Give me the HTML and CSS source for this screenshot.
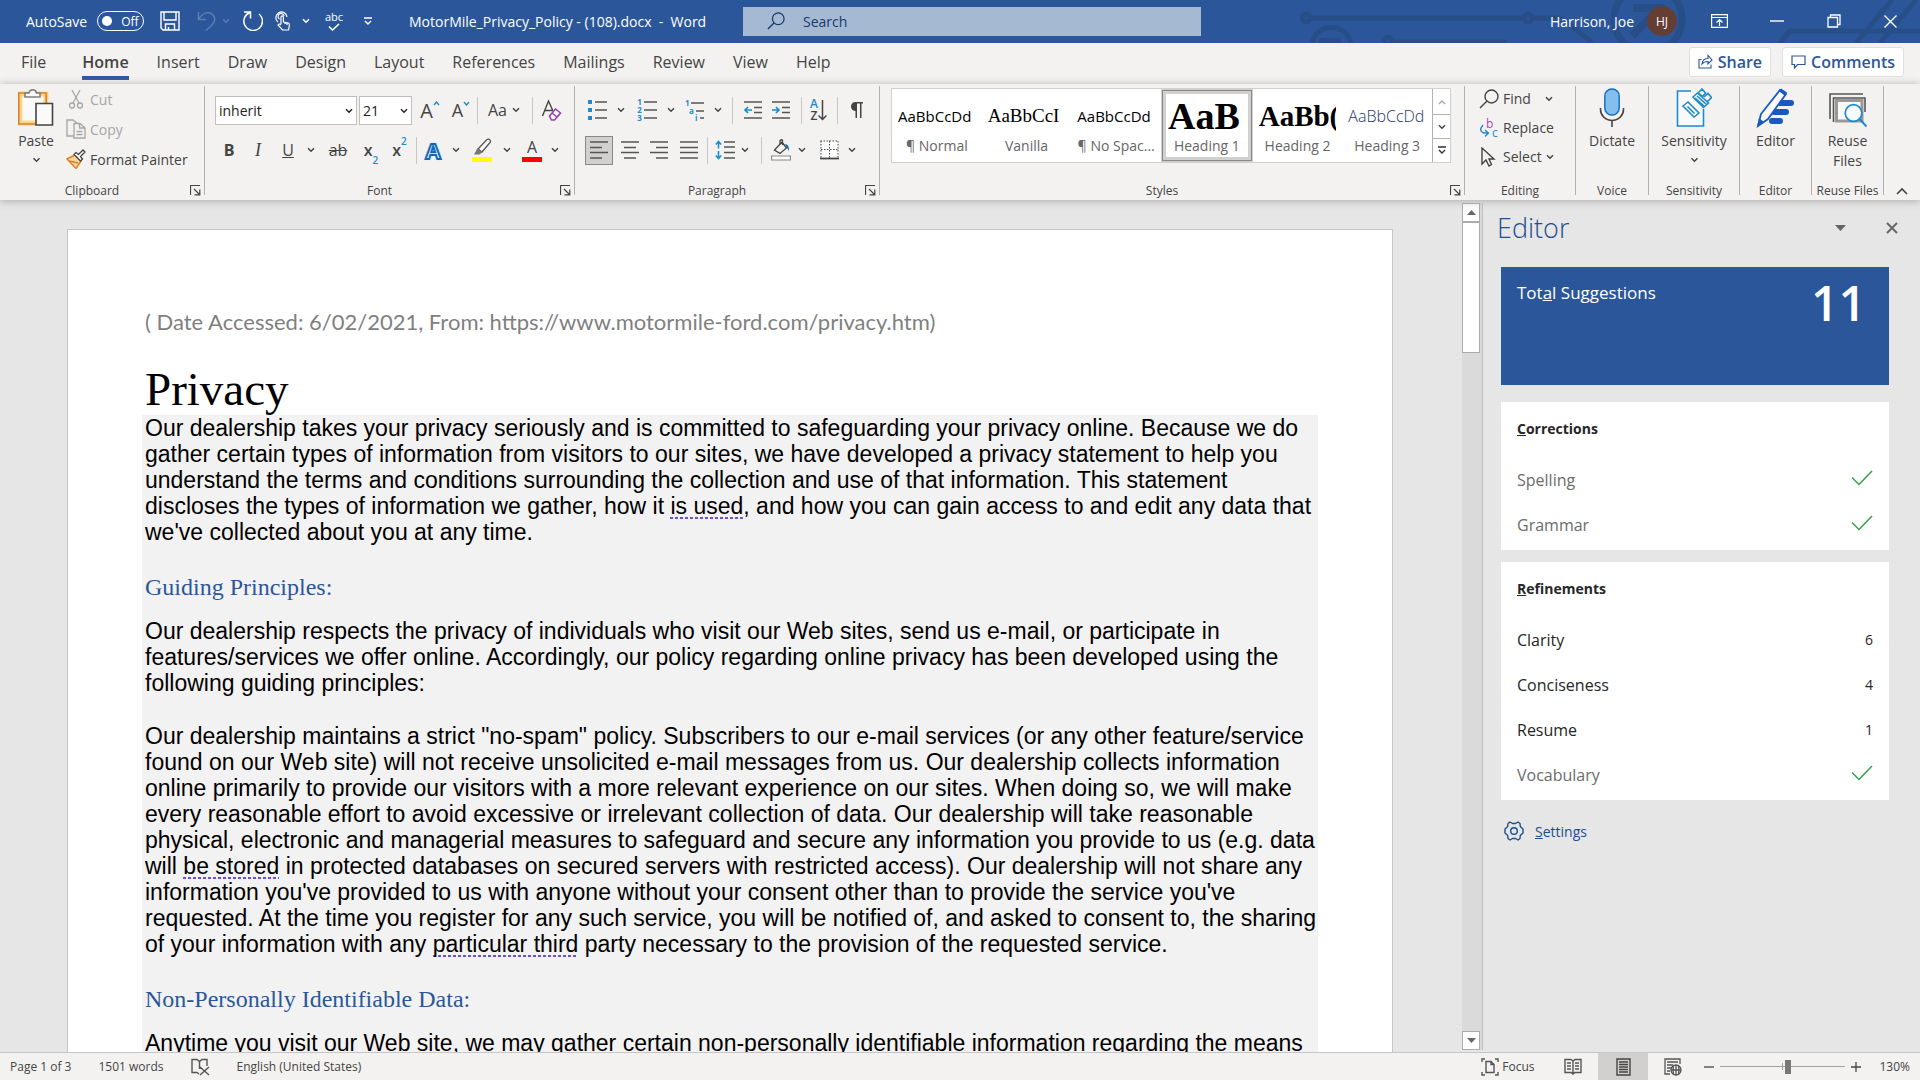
FILE: index.html
```html
<!DOCTYPE html>
<html lang="en">
<head>
<meta charset="utf-8">
<title>MotorMile_Privacy_Policy - (108).docx - Word</title>
<link rel="stylesheet" href="styles.css">
</head>
<body>
<svg class="sprite" aria-hidden="true">
  <symbol id="chev" viewBox="0 0 8 6"><path d="M1 1.2l3 3 3-3" fill="none" stroke="currentColor" stroke-width="1.5"/></symbol>
  <symbol id="launch" viewBox="0 0 11 11"><path d="M.5 10V.5H10M4 4l5.5 5.5M9.8 4.5v5.3H4.5" fill="none" stroke="currentColor" stroke-width="1.2"/></symbol>
  <symbol id="check" viewBox="0 0 22 16"><path d="M1 7.500l7 7L21 1" fill="none" stroke="#35a04a" stroke-width="1.500"/></symbol>
  <symbol id="lens" viewBox="0 0 20 20"><circle cx="12.500" cy="7.500" r="6.500" fill="none" stroke="currentColor" stroke-width="1.400"/><path d="M8 12l-7 7" stroke="currentColor" stroke-width="1.500"/></symbol>
</svg>

<header class="titlebar">
  <svg class="circuit" viewBox="0 0 620 43" aria-hidden="true">
    <g fill="none" stroke="#274e87" stroke-width="5">
      <circle cx="6" cy="18" r="4"/><path d="M10 18h213"/><circle cx="228" cy="18" r="4"/><path d="M232 18h28l32 24"/>
      <path d="M12 43a20 20 0 0 1 39 0"/><path d="M19 41h22" stroke-width="6"/>
      <circle cx="88" cy="41" r="4"/><path d="M92 42h115"/>
      <circle cx="348" cy="19" r="34" stroke-width="7"/><path d="M333 8h28v26M360 8l-28 28" stroke-width="8"/>
      <path d="M480 43l10-12h130M556 43l36-43M580 43l36-43"/>
    </g>
  </svg>
  <div class="quick">
    <span id="autosave-label">AutoSave</span>
    <button class="toggle" aria-labelledby="autosave-label"><i></i>Off</button>
    <button aria-label="Save"><svg width="20" height="20" viewBox="0 0 20 20" fill="none" stroke="#fff" stroke-width="1.400"><path d="M1 1h18v18H3l-2-2zM4 1v8h12V1M5.500 19v-6h9v6M8.500 19v-3"/></svg></button>
    <button aria-label="Undo" class="faded"><svg width="19" height="20" viewBox="0 0 19 20" fill="none" stroke="currentColor" stroke-width="1.500"><path d="M1.500 1v7.500H9M1.500 8.500C6 1 12 0 15.500 3.500S18 11 15 14L9 19.500"/></svg></button>
    <button aria-label="Undo options" class="faded"><svg width="8" height="6"><use href="#chev"/></svg></button>
    <button aria-label="Redo"><svg width="20" height="20" viewBox="0 0 20 20" fill="none" stroke="#fff" stroke-width="1.500"><path d="M1 1h6.500v6.500M7 1.500A9.300 9.300 0 1 0 16 3"/></svg></button>
    <button aria-label="Touch mode"><svg width="16" height="20" viewBox="0 0 16 20" fill="none" stroke="#fff" stroke-width="1.200"><path d="M3 11a5.600 5.600 0 1 1 9-5M4.500 8a3 3 0 1 1 4.500-3"/><path d="M6 13V6a1.200 1.200 0 0 1 2.400 0v5l5 1q1.200.5 1 2l-.8 5H7.500L3 14q1-2 3 0M10 11v2M12 12v2"/></svg></button>
    <button aria-label="Touch options"><svg width="8" height="6"><use href="#chev"/></svg></button>
    <button aria-label="Spelling" class="abc">abc<svg width="12" height="8" viewBox="0 0 12 8"><path d="M1 3.500l3.500 3.500L11 1" fill="none" stroke="#fff" stroke-width="1.500"/></svg></button>
    <button aria-label="Customize"><svg width="10" height="9" viewBox="0 0 10 9"><path d="M1 1h8M2 4l3 3 3-3" fill="none" stroke="#fff" stroke-width="1.400"/></svg></button>
  </div>
  <span class="doc-title">MotorMile_Privacy_Policy - (108).docx&nbsp; -&nbsp; Word</span>
  <label class="search"><svg width="18" height="18"><use href="#lens"/></svg><input type="text" placeholder="Search" aria-label="Search"></label>
  <div class="account">
    <span>Harrison, Joe</span><span class="avatar">HJ</span>
    <button aria-label="Ribbon display"><svg width="17" height="14" viewBox="0 0 17 14" fill="none" stroke="#fff" stroke-width="1.200"><path d="M.6.6h15.800v12.800H.6zM.6 3.500h15.800M8.500 12V6M5.500 8.500l3-3 3 3"/></svg></button>
    <button aria-label="Minimize"><svg width="14" height="2"><path d="M0 1h14" stroke="#fff" stroke-width="1.400"/></svg></button>
    <button aria-label="Restore"><svg width="14" height="14" viewBox="0 0 14 14" fill="none" stroke="#fff" stroke-width="1.300"><path d="M1 3.500h9.500V13H1zM3.500 3.500V1H13v9.500h-2.500"/></svg></button>
    <button aria-label="Close"><svg width="13" height="13"><path d="M.5.5l12 12M12.500.5l-12 12" stroke="#fff" stroke-width="1.400"/></svg></button>
  </div>
</header>

<nav class="tabs">
  <a href="#file" class="file">File</a><a href="#home" class="active">Home</a><a href="#insert">Insert</a><a href="#draw">Draw</a><a href="#design">Design</a><a href="#layout">Layout</a><a href="#references">References</a><a href="#mailings">Mailings</a><a href="#review">Review</a><a href="#view">View</a><a href="#help">Help</a>
  <div class="tab-actions">
    <button><svg width="15" height="15" viewBox="0 0 15 15" fill="none" stroke="currentColor" stroke-width="1.100"><path d="M3.500 5.500H1V14h12v-3.500M4 10c.5-4 2.500-5.500 6-5.500V1.500L14 6l-4 4V7.500C7 7.500 5.500 8 4 10z"/></svg>Share</button>
    <button><svg width="15" height="14" viewBox="0 0 15 14" fill="none" stroke="currentColor" stroke-width="1.200"><path d="M1 1h13v8.500H6.500L3.500 13V9.500H1z"/></svg>Comments</button>
  </div>
</nav>

<section class="ribbon">
  <div class="group clipboard">
    <div class="clip-body">
      <button class="big">
        <svg width="36" height="40" viewBox="0 0 36 40" fill="none"><path d="M2 6h26v29H2z" fill="#fafafa" stroke="#fbd78b" stroke-width="5"/><path d="M.8 5h27.400v31H.8z" stroke="#e07f24" stroke-width="1.600"/><path d="M7 9V5h4a3.800 3.800 0 0 1 7.500 0H22v4z" fill="#fafafa" stroke="#808080" stroke-width="1.600"/><path d="M18 15.500h16.500V37H18z" fill="#fafafa" stroke="#444" stroke-width="1.600"/></svg>
        Paste<svg width="9" height="6"><use href="#chev"/></svg></button>
      <div class="clip-list">
        <button class="off"><svg width="20" height="20" viewBox="0 0 20 20" fill="none" stroke="currentColor" stroke-width="1.300"><path d="M6 1l7 13M14 1L7 14"/><circle cx="6" cy="16.500" r="2.500"/><circle cx="14" cy="16.500" r="2.500"/></svg>Cut</button>
        <button class="off"><svg width="20" height="20" viewBox="0 0 20 20" fill="none" stroke="currentColor" stroke-width="1.300"><path d="M8 17H1V1h6l4 3M8 4.500h6l5 4.500v10H8zM13.500 4.500V9H19M10.500 12.500h6M10.500 15.500h6"/></svg>Copy</button>
        <button><svg width="20" height="20" viewBox="0 0 20 20" fill="none"><path d="M1 10l8-4 6 6-5 7.500z" fill="#fcd9a0" stroke="#e07f24" stroke-width="1.500"/><path d="M3.500 12L12 14" stroke="#e07f24" stroke-width="1.500"/><path d="M8 5.500l2-2 2.500 2 4.500-4.500 2 2-4.500 4.500 2 2.500-2 2z" fill="#fafafa" stroke="#444" stroke-width="1.300"/></svg>Format Painter</button>
      </div>
    </div>
    <footer class="launches">Clipboard<button aria-label="Clipboard settings"><svg width="11" height="11"><use href="#launch"/></svg></button></footer>
  </div>

  <div class="group font">
    <div class="tools font-a">
      <label class="combo"><select aria-label="Font"><option>inherit</option></select><svg width="8" height="6"><use href="#chev"/></svg></label>
      <label class="combo"><select aria-label="Font size"><option>21</option></select><svg width="8" height="6"><use href="#chev"/></svg></label>
      <button aria-label="Grow font" class="grow">A<svg width="7" height="5" viewBox="0 0 7 5"><path d="M1 4l2.500-3L6 4" fill="none" stroke="#1e8bcd" stroke-width="1.400"/></svg></button>
      <button aria-label="Shrink font" class="shrink">A<svg width="7" height="5" viewBox="0 0 7 5"><path d="M1 1l2.500 3L6 1" fill="none" stroke="#1e8bcd" stroke-width="1.400"/></svg></button>
      <i class="sep"></i>
      <button class="case">Aa<svg width="8" height="6"><use href="#chev"/></svg></button>
      <i class="sep"></i>
      <button aria-label="Clear formatting"><svg width="22" height="22" viewBox="0 0 22 22" fill="none"><path d="M1.500 17L7.500 2l4.500 10M4 11.500h7" stroke="#444" stroke-width="1.400"/><path d="M8.500 17l6-7 5 4-6 7h-3zM11 14l5 4" fill="#fff" stroke="#9b3fb0" stroke-width="1.600"/></svg></button>
    </div>
    <div class="tools font-b">
      <button><b>B</b></button><button class="ital">I</button><button><u>U</u></button><button aria-label="Underline style"><svg width="8" height="6"><use href="#chev"/></svg></button>
      <button><s>ab</s></button><button class="script-x">x<sub>2</sub></button><button class="script-x">x<sup>2</sup></button><i class="sep"></i>
      <button class="effect">A</button><button aria-label="Effects"><svg width="8" height="6"><use href="#chev"/></svg></button>
      <button aria-label="Highlight"><svg width="20" height="24" viewBox="0 0 20 24"><path d="M0 19h20v5H0z" fill="#ff0"/><path d="M6 11l9-9.500q2-1 3 .500t0 2.500l-8 9.500z" fill="#fafafa" stroke="#555" stroke-width="1.300"/><path d="M5.500 10l5 4-3 2.500H2z" fill="#777"/></svg></button><button aria-label="Highlight colour"><svg width="8" height="6"><use href="#chev"/></svg></button>
      <button class="color">A</button><button aria-label="Font colour"><svg width="8" height="6"><use href="#chev"/></svg></button>
    </div>
    <footer class="launches">Font<button aria-label="Font settings"><svg width="11" height="11"><use href="#launch"/></svg></button></footer>
  </div>

  <div class="group paragraph">
    <div class="tools para-a">
      <button aria-label="Bullets"><svg width="20" height="20" viewBox="0 0 20 20"><path d="M0 0h4v4H0zM0 8h4v4H0zM0 16h4v4H0z" fill="#1e8bcd"/><path d="M7 2h12M7 10h12M7 18h12" stroke="#555" stroke-width="1.400"/></svg></button><button aria-label="Bullet style"><svg width="8" height="6"><use href="#chev"/></svg></button>
      <button aria-label="Numbering" class="numbering"><span>1<br>2<br>3</span><svg width="13" height="20" viewBox="0 0 13 20"><path d="M0 2h13M0 10h13M0 18h13" stroke="#555" stroke-width="1.400"/></svg></button><button aria-label="Number style"><svg width="8" height="6"><use href="#chev"/></svg></button>
      <button aria-label="Multilevel list"><svg class="letters" width="20" height="21" viewBox="0 0 20 21"><g fill="#1e8bcd" font-family="Open Sans" font-weight="bold" font-size="8"><text x="0" y="6">1</text><text x="4" y="14">a</text><text x="10" y="21">i</text></g><path d="M6 3h13M11 11h8M15 18h4" stroke="#555" stroke-width="1.400"/></svg></button><button aria-label="List style"><svg width="8" height="6"><use href="#chev"/></svg></button>
      <i class="sep"></i>
      <button aria-label="Decrease indent"><svg width="18" height="18" viewBox="0 0 18 18" fill="none" stroke-width="1.400"><path d="M0 1h18M10 6.500h8M10 11.500h8M0 17h18" stroke="#555"/><path d="M1 9h7M4 6L1 9l3 3" stroke="#1e8bcd" stroke-width="1.700"/></svg></button>
      <button aria-label="Increase indent"><svg width="18" height="18" viewBox="0 0 18 18" fill="none" stroke-width="1.400"><path d="M0 1h18M10 6.500h8M10 11.500h8M0 17h18" stroke="#555"/><path d="M0 9h7M4 6l3 3-3 3" stroke="#1e8bcd" stroke-width="1.700"/></svg></button>
      <i class="sep"></i>
      <button aria-label="Sort" class="sort"><span><em>A</em><br>Z</span><svg width="9" height="21" viewBox="0 0 9 21"><path d="M4.500 0v19M.5 15.500l4 4 4-4" fill="none" stroke="#444" stroke-width="1.500"/></svg></button>
      <i class="sep"></i>
      <button aria-label="Show marks"><svg width="13" height="16" viewBox="0 0 13 16"><path d="M6 0h7v1.500h-1.500V16H10V1.500H7V16H5.500V9A4.500 4.500 0 0 1 5.500 0z" fill="#444"/></svg></button>
    </div>
    <div class="tools para-b">
      <button aria-label="Align left" class="pressed"><svg width="18" height="18"><path d="M0 1h18M0 6.500h12M0 11.500h18M0 17h12" stroke="#555" stroke-width="1.500"/></svg></button>
      <button aria-label="Center"><svg width="18" height="18"><path d="M0 1h18M3 6.500h12M0 11.500h18M3 17h12" stroke="#555" stroke-width="1.500"/></svg></button>
      <button aria-label="Align right"><svg width="18" height="18"><path d="M0 1h18M6 6.500h12M0 11.500h18M6 17h12" stroke="#555" stroke-width="1.500"/></svg></button>
      <button aria-label="Justify"><svg width="18" height="18"><path d="M0 1h18M0 6.500h18M0 11.500h18M0 17h18" stroke="#555" stroke-width="1.500"/></svg></button>
      <i class="sep"></i>
      <button aria-label="Line spacing"><svg width="20" height="20" viewBox="0 0 20 20" fill="none"><path d="M9 2h11M9 7h11M9 12.500h11M9 18h11" stroke="#555" stroke-width="1.400"/><path d="M3.500 1.500v7M.8 4.500l2.700-3 2.700 3M3.500 11v7M.8 15.500l2.700 3 2.700-3" stroke="#1e8bcd" stroke-width="1.600"/></svg></button><button aria-label="Spacing options"><svg width="8" height="6"><use href="#chev"/></svg></button>
      <i class="sep"></i>
      <button aria-label="Shading"><svg width="20" height="22" viewBox="0 0 20 22" fill="none"><path d="M.6 17h18.800v4H.6z" fill="#fff" stroke="#888" stroke-width="1.100"/><path d="M3.500 11L11 3l4.500 6-6.500 5.500zM9 6V1.500q2-1.500 2.500 0V6" stroke="#444" stroke-width="1.300"/><path d="M14 5q4.500 0 4 7l-2-3z" fill="#1e6fb8"/></svg></button><button aria-label="Shading colour"><svg width="8" height="6"><use href="#chev"/></svg></button>
      <button aria-label="Borders"><svg width="19" height="20" viewBox="0 0 19 20" fill="none" stroke="#444"><path d="M1 1h17v17H1z" fill="#fff" stroke="none"/><path d="M.5 1h18M1 1v17M18 1v17M9.500 1v17M1 9.500h17" stroke-dasharray="1.500 1.500"/><path d="M0 18.500h19" stroke-width="1.800"/></svg></button><button aria-label="Border style"><svg width="8" height="6"><use href="#chev"/></svg></button>
    </div>
    <footer class="launches">Paragraph<button aria-label="Paragraph settings"><svg width="11" height="11"><use href="#launch"/></svg></button></footer>
  </div>

  <div class="group styles">
    <div class="gallery">
      <button class="cell"><span class="sample">AaBbCcDd</span>¶ Normal</button>
      <button class="cell"><span class="sample serif">AaBbCcI</span>Vanilla</button>
      <button class="cell"><span class="sample">AaBbCcDd</span>¶ No Spac...</button>
      <button class="cell chosen"><span class="sample h1">AaB</span>Heading 1</button>
      <button class="cell"><span class="sample h2">AaBb(</span>Heading 2</button>
      <button class="cell"><span class="sample h3">AaBbCcDd</span>Heading 3</button>
      <div class="gallery-nav">
        <button aria-label="Up" class="off"><svg width="8" height="6" viewBox="0 0 8 6"><path d="M1 5l3-3 3 3" fill="none" stroke="currentColor" stroke-width="1.300"/></svg></button>
        <button aria-label="Down"><svg width="8" height="6"><use href="#chev"/></svg></button>
        <button aria-label="More"><svg width="10" height="9" viewBox="0 0 10 9"><path d="M1 1h8M2 4l3 3 3-3" fill="none" stroke="#333" stroke-width="1.400"/></svg></button>
      </div>
    </div>
    <footer class="launches">Styles<button aria-label="Style settings"><svg width="11" height="11"><use href="#launch"/></svg></button></footer>
  </div>

  <div class="group editing">
    <div class="edit-list">
      <button><svg width="20" height="20"><use href="#lens"/></svg>Find<svg class="far" width="8" height="6"><use href="#chev"/></svg></button>
      <button><svg class="letters" width="20" height="20" viewBox="0 0 20 20"><text x="7" y="10" font-family="Open Sans" font-size="12" fill="#b146c2">b</text><text x="13" y="19" font-family="Open Sans" font-size="12" fill="#1e8bcd">c</text><path d="M4 7q-5 6 1 8h4M6 12l3.500 3L6 18.500" fill="none" stroke="#1e8bcd" stroke-width="1.400"/></svg>Replace</button>
      <button><svg width="20" height="20" viewBox="0 0 20 20"><path d="M3 1v16l4-4 3 6 2.500-1.500L10 12h5z" fill="none" stroke="#444" stroke-width="1.400"/></svg>Select<svg width="8" height="6"><use href="#chev"/></svg></button>
    </div>
    <footer>Editing</footer>
  </div>

  <div class="group voice">
    <button class="big"><svg width="26" height="40" viewBox="0 0 26 40" fill="none"><rect x="5.800" y="1" width="14.400" height="26" rx="7" fill="#83beec" stroke="#0f6cbd" stroke-width="1.400"/><path d="M1.500 20v1.500a11.500 11 0 0 0 23 0V20M13 32.500V39" stroke="#444" stroke-width="1.600"/></svg>Dictate</button>
    <footer>Voice</footer>
  </div>
  <div class="group sensitivity">
    <button class="big"><svg width="36" height="40" viewBox="0 0 36 40" fill="none" stroke="#1e8bcd" stroke-width="1.600"><path d="M15 3H1.500v35h26V21" fill="#fafafa"/><path d="M7 18l5-4 11 11-5 4zM11.500 18.500l7 7"/><path d="M17 9l4.500-4 11 10-5 4.500zM22 5l4-4 3.500 4-3 3.500zM28 9l4-3.500 3.500 4-4 4M19 10l9 8M21 8l9 8"/></svg>Sensitivity<svg width="9" height="6"><use href="#chev"/></svg></button>
    <footer>Sensitivity</footer>
  </div>
  <div class="group editor-group">
    <button class="big"><svg width="40" height="40" viewBox="0 0 40 40"><path d="M24 15h11M18 24h12M16 33h8" stroke="#185abd" stroke-width="6" stroke-linecap="round"/><path d="M5 26L24 2l6 4-18 25-10 7z" fill="#fafafa" stroke="#185abd" stroke-width="1.800"/><path d="M23 3l2-2.500 6 4L29 8zM1 39l2-9 5 4z" fill="#185abd"/></svg>Editor</button>
    <footer>Editor</footer>
  </div>
  <div class="group reuse">
    <button class="big"><svg width="38" height="40" viewBox="0 0 38 40" fill="none"><path d="M1 31V6h33" stroke="#555" stroke-width="1.600"/><path d="M4.500 34V10H36v14" stroke="#555" stroke-width="1.600"/><path d="M7.500 12.500H33V33H7.500z" fill="#fafafa" stroke="#999" stroke-width="3"/><circle cx="24.500" cy="25" r="8.300" fill="#f8fbfd" stroke="#1e8bcd" stroke-width="1.700"/><path d="M30.500 31l7 7.500" stroke="#1e8bcd" stroke-width="2"/></svg>Reuse<br>Files</button>
    <footer>Reuse Files</footer>
  </div>
  <button class="collapse" aria-label="Collapse ribbon"><svg width="12" height="8"><path d="M1 7l5-5 5 5" fill="none" stroke="#444" stroke-width="1.600"/></svg></button>
</section>

<main class="workspace">
  <div class="canvas">
    <article class="paper">
      <p class="source">( Date Accessed: 6/02/2021, From: https://www.motormile-ford.com/privacy.htm)</p>
      <h1>Privacy</h1>
      <div class="shade">
        <p>Our dealership takes your privacy seriously and is committed to safeguarding your privacy online. Because we do<br>gather certain types of information from visitors to our sites, we have developed a privacy statement to help you<br>understand the terms and conditions surrounding the collection and use of that information. This statement<br>discloses the types of information we gather, how it <span class="hint">is used</span>, and how you can gain access to and edit any data that<br>we've collected about you at any time.</p>
        <h2>Guiding Principles:</h2>
        <p>Our dealership respects the privacy of individuals who visit our Web sites, send us e-mail, or participate in<br>features/services we offer online. Accordingly, our policy regarding online privacy has been developed using the<br>following guiding principles:</p>
        <p>Our dealership maintains a strict "no-spam" policy. Subscribers to our e-mail services (or any other feature/service<br>found on our Web site) will not receive unsolicited e-mail messages from us. Our dealership collects information<br>online primarily to provide our visitors with a more relevant experience on our sites. When doing so, we will make<br>every reasonable effort to avoid excessive or irrelevant collection of data. Our dealership will take reasonable<br>physical, electronic and managerial measures to safeguard and secure any information you provide to us (e.g. data<br>will <span class="hint">be stored</span> in protected databases on secured servers with restricted access). Our dealership will not share any<br>information you've provided to us with anyone without your consent other than to provide the service you've<br>requested. At the time you register for any such service, you will be notified of, and asked to consent to, the sharing<br>of your information with any <span class="hint">particular third</span> party necessary to the provision of the requested service.</p>
        <h2>Non-Personally Identifiable Data:</h2>
        <p>Anytime you visit our Web site, we may gather certain non-personally identifiable information regarding the means</p>
      </div>
    </article>
  </div>
  <div class="scroll">
    <button aria-label="Scroll up"><svg width="9" height="5"><path d="M0 5l4.500-5L9 5z" fill="#666"/></svg></button>
    <div class="thumb"></div>
    <button class="down" aria-label="Scroll down"><svg width="9" height="5"><path d="M0 0l4.500 5L9 0z" fill="#666"/></svg></button>
  </div>
  <aside class="pane">
    <div class="pane-head"><h2>Editor</h2>
      <button aria-label="Pane options"><svg width="11" height="6"><path d="M0 0l5.500 6L11 0z" fill="#666"/></svg></button>
      <button aria-label="Close pane"><svg width="12" height="12"><path d="M1 1l10 10M11 1L1 11" stroke="#666" stroke-width="2"/></svg></button></div>
    <button class="total"><span>Tot<u>a</u>l Suggestions</span><strong>11</strong></button>
    <section class="card">
      <h3><u>C</u>orrections</h3>
      <button class="done"><span>Spelling</span><svg width="22" height="16"><use href="#check"/></svg></button>
      <button class="done"><span>Grammar</span><svg width="22" height="16"><use href="#check"/></svg></button>
    </section>
    <section class="card">
      <h3><u>R</u>efinements</h3>
      <button><span>Clarity</span><small>6</small></button>
      <button><span>Conciseness</span><small>4</small></button>
      <button><span>Resume</span><small>1</small></button>
      <button class="done"><span>Vocabulary</span><svg width="22" height="16"><use href="#check"/></svg></button>
    </section>
    <a href="#settings" class="settings"><svg width="20" height="20" viewBox="0 0 20 20" fill="none" stroke="currentColor" stroke-width="1.400" stroke-linejoin="round"><circle cx="10" cy="10" r="3.300"/><path d="M6 1l2.500 1.500h3L14 1l2 1.500.3 3L19 8v4l-2.700 2.500-.3 3-2 1.500-2.500-1.500h-3L6 19l-2-1.500-.3-3L1 12V8l2.700-2.500.3-3z"/></svg><span><u>S</u>ettings</span></a>
  </aside>
</main>

<footer class="status">
  <span>Page 1 of 3</span><span>1501 words</span>
  <svg width="19" height="18" viewBox="0 0 19 18" fill="none" stroke="#555" stroke-width="1.400"><path d="M8 16L6 14.500H1V1.500h5l2.500 2 2.500-2h5V8M8.500 3.500V11M9 9l9 8M18 9l-9 8"/></svg>
  <span>English (United States)</span>
  <div class="status-right">
    <button class="focus"><svg width="18" height="18" viewBox="0 0 18 18" fill="none" stroke="#555" stroke-width="1.400"><path d="M4 1H1v3M14 1h3v3M4 17H1v-3M14 17h3v-3M5 3.500h5l3 3v8H5zM10 3.500v3h3"/></svg>Focus</button>
    <button aria-label="Read mode" class="mode"><svg width="18" height="17" viewBox="0 0 18 17" fill="none" stroke="#555" stroke-width="1.400"><path d="M9 3L7 1.500H1v13h6L9 16l2-1.500h6v-13h-6zM9 3v13M3 5h4M3 8h4M3 11h4M11 5h4M11 8h4M11 11h4"/></svg></button>
    <button aria-label="Print layout" class="mode on"><svg width="15" height="18" viewBox="0 0 15 18" fill="none" stroke="#444" stroke-width="1.400"><path d="M1 1h13v16H1zM3 4h9M3 6.500h9M3 9h9M3 11.500h9M3 14h9"/></svg></button>
    <button aria-label="Web layout" class="mode"><svg width="18" height="18" viewBox="0 0 18 18" fill="none" stroke="#555" stroke-width="1.300"><path d="M6 16H1V1h15v5M3 4h11M3 7h6M3 10h4M3 13h3"/><circle cx="12" cy="12" r="5"/><path d="M7 12h10M12 7v10M9.500 8q-1 4 0 8M14.500 8q1 4 0 8"/></svg></button>
    <button aria-label="Zoom out" class="step"><svg width="10" height="10"><path d="M0 5h10" stroke="#444" stroke-width="1.300"/></svg></button>
    <input type="range" aria-label="Zoom" min="0" max="100" value="54">
    <button aria-label="Zoom in" class="step"><svg width="10" height="10"><path d="M0 5h10M5 0v10" stroke="#444" stroke-width="1.300"/></svg></button>
    <span class="percent">130%</span>
  </div>
</footer>
</body>
</html>
```
FILE: styles.css
```css
* { box-sizing: border-box; }
body {
  margin: 0; height: 100vh; display: flex; flex-direction: column; overflow: hidden;
  font-family: "Open Sans", "Noto Sans", sans-serif; font-size: 14px; color: #444; background: #e6e6e6;
}
button, input, select { font: inherit; color: inherit; background: none; border: 0; padding: 0; margin: 0; }
button { display: flex; align-items: center; justify-content: center; white-space: nowrap; }
a { color: inherit; text-decoration: none; }
svg { display: block; flex: none; }
h1, h2, h3, p { margin: 0; font-weight: normal; }
.sprite { position: absolute; width: 0; height: 0; }
.letters { overflow: visible; }
.off { color: #a6a6a6; }

/* title bar */
.titlebar { position: relative; display: flex; align-items: center; flex: none; height: 43px; padding: 0 1px 1px 26px; background: #2b579a; color: #fff; }
.circuit { position: absolute; right: 0; top: 0; width: 620px; height: 43px; }
.quick { display: grid; grid-template-columns: 71px 47px 52px 20px 20px 34px 26px 20px 36px 32px; align-items: center; height: 42px; }
.quick button { height: 30px; }
.quick .toggle { height: 20px; border: 1px solid #fff; border-radius: 10px; gap: 9px; font-size: 12px; }
.toggle i { width: 10px; height: 10px; border-radius: 5px; background: #fff; }
.quick .faded { color: #5a7db3; }
.quick .abc { flex-direction: column; font-size: 11px; line-height: 12px; }
.doc-title { width: 334px; margin-left: 25px; white-space: nowrap; }
.search { display: flex; align-items: center; gap: 18px; flex: 0 1 458px; height: 29px; padding-left: 24px; background: #a6b9d2; color: #173a6d; }
.search input { flex: 1; min-width: 0; outline: 0; }
.search input::placeholder { color: #173a6d; opacity: 1; }
.account { position: relative; display: flex; align-items: center; margin-left: auto; }
.avatar { display: flex; align-items: center; justify-content: center; width: 30px; height: 30px; margin: 0 14px 0 13px; border-radius: 15px; background: #643d33; font-size: 12px; }
.account button { width: 57px; height: 42px; }

/* tabs */
.tabs { display: flex; align-items: center; flex: none; gap: 28px; height: 41px; padding: 0 16px 2px 21px; background: #f3f2f1; font-size: 16px; }
.tabs a { height: 34px; line-height: 32px; border-bottom: 4px solid transparent; }
.tabs .file { padding-right: 8px; }
.tabs .active { font-weight: 600; border-color: #2b579a; }
.tab-actions { display: flex; gap: 11px; margin-left: auto; }
.tab-actions button { height: 30px; gap: 5px; padding: 0 8px; margin-bottom: 2px; border: 1px solid #e1dfdd; border-radius: 3px; background: #fff; color: #2b579a; font-weight: 600; }

/* ribbon */
.ribbon { position: relative; z-index: 1; display: flex; flex: none; height: 116px; padding: 2px 0 5px; background: #f3f2f1; box-shadow: 0 1px 8px #aaa; }
.group { display: flex; flex-direction: column; flex: none; border-right: 1px solid #b3b0ad; }
.group > footer { position: relative; display: flex; justify-content: center; align-items: center; height: 14px; margin-top: auto; margin-bottom: -2px; font-size: 12px; white-space: nowrap; }
.group > .launches { padding-right: 20px; }
.group > footer button { position: absolute; right: 3px; top: 2px; }
.clipboard { width: 205px; }
.font { width: 370px; }
.font .tools { margin-left: 10px; }
.paragraph { width: 305px; }
.paragraph .tools { margin-left: 8px; }
.styles { flex: 1 1 0; min-width: 0; }
.editing { width: 111px; }
.voice { width: 73px; }
.sensitivity { width: 91px; }
.editor-group { width: 72px; }
.reuse { width: 72px; }
.big { flex-direction: column; justify-content: flex-start; padding-top: 2px; line-height: 20px; white-space: normal; }
.big svg:first-child { margin-bottom: 3px; }
.big svg + svg { margin-top: 6px; }
.clip-body { display: flex; gap: 10px; padding-left: 16px; }
.clip-body .big { width: 40px; }
.clip-list, .edit-list { margin-top: -2px; }
.clip-list button { height: 30px; gap: 4px; }
.tools { display: grid; align-items: center; height: 40px; }
.tools button { height: 29px; }
.font-a, .para-a { margin-top: 4px; }
.font-a { grid-template-columns: 142px 55px 36px 26px 6px 48px 8px 32px; font-size: 18px; }
.font-b { grid-template-columns: 28px 30px 30px 16px 38px 28px 29px 4px 30px 16px 36px 14px 36px 10px; font-size: 16px; }
.para-a { grid-template-columns: 30px 16px 36px 12px 36px 9px 21px 20px 36px 4px 31px 7px 30px; }
.para-b { grid-template-columns: 32px 29px 30px 30px 7px 28px 12px 20px 20px 22px 32px 14px; }
.sep { justify-self: center; width: 1px; height: 27px; background: #c8c6c4; }
.combo { position: relative; height: 29px; font-size: 14px; color: #222; }
.combo + .combo { margin-left: 2px; }
.combo select { appearance: none; width: 100%; height: 29px; padding-left: 3px; border: 1px solid #c1bfbd; background: #fff; }
.combo svg { position: absolute; right: 4px; top: 12px; }
.grow svg, .shrink svg { align-self: flex-start; margin-top: 5px; }
.grow { font-size: 20px; }
.case { gap: 5px; font-size: 16px; }
.ital { font-family: "Liberation Serif", serif; font-style: italic; font-size: 18px; }
.script-x { font-weight: 600; }
.script-x sub, .script-x sup { color: #1e8bcd; font-size: 10px; line-height: 10px; }
.script-x sub { align-self: flex-end; }
.script-x sup { align-self: flex-start; }
.tools .effect { font-size: 22px; font-weight: bold; color: #fff; -webkit-text-stroke: 2px #1269b5; text-shadow: 0 0 2px #4ba6e8; }
.tools .color { justify-self: center; width: 20px; height: 24px; border-bottom: 5px solid #f00; line-height: 19px; }
.numbering { gap: 2px; }
.numbering span { color: #1e8bcd; font-size: 8px; line-height: 8px; font-weight: bold; }
.sort span { font-size: 12px; line-height: 12px; font-weight: 600; }
.sort em { font-style: normal; color: #1e8bcd; }
.tools .pressed { justify-self: center; width: 28px; border: 1px solid #8a8886; background: #d2d0ce; }

.gallery { display: flex; height: 75px; margin: 2px 13px 0 11px; border: 1px solid #d2d0ce; background: #fff; }
.cell { flex: 1 1 0; min-width: 0; flex-direction: column; padding: 0 6px; color: #666; line-height: 20px; }
.cell .sample { display: flex; align-items: center; width: 100%; height: 40px; overflow: hidden; color: #000; font-size: 15px; }
.cell .serif, .cell .h1, .cell .h2 { font-family: "Liberation Serif", serif; }
.cell .serif { font-size: 19px; }
.cell .h1 { font-size: 38px; font-weight: bold; }
.cell .h2 { font-size: 29px; font-weight: bold; }
.cell .h3 { font-size: 16px; font-weight: 300; color: #1f3864; }
.chosen { outline: 1px solid #8a8886; outline-offset: -2px; border: 5px solid #d2d0ce; padding: 0 2px; }
.gallery-nav { display: grid; grid-template-rows: 25px 24px 24px; width: 18px; border-left: 1px solid #b3b0ad; }
.gallery-nav button + button { border-top: 1px solid #b3b0ad; }
.edit-list { padding: 0 0 0 14px; }
.edit-list button { height: 29px; gap: 4px; }
.edit-list .far { margin-left: 10px; }
.collapse { flex: none; width: 36px; height: 14px; margin-top: 98px; }

/* workspace */
.workspace { display: flex; flex: 1; min-height: 0; }
.canvas { flex: 1; min-width: 0; overflow: hidden; padding: 29px 69px 0 67px; }
.paper { height: 1400px; padding: 77px 74px 0 74px; border: 1px solid #c6c6c6; background: #fff; white-space: nowrap; }
.source { padding: 0 3px; font: 22px/30px Lato, sans-serif; color: #7f7f7f; }
h1 { margin-top: 26px; padding: 0 3px; font: 47px/52px "Liberation Serif", serif; color: #000; }
.shade { height: 100%; padding: 0 3px; background: #f2f2f2; font: 23px/26px "Liberation Sans", sans-serif; color: #000; }
.shade h2 { margin: 29px 0 18px; font: 24px/26px "Liberation Serif", serif; color: #2b579a; }
.shade p + p { margin-top: 27px; }
.hint { background: repeating-linear-gradient(90deg, #6a4fd8 0 3px, transparent 3px 5px) bottom / 100% 2px no-repeat; }
.scroll { display: flex; flex-direction: column; width: 21px; margin: 3px 0 2px; padding-right: 2px; border-right: 1px solid #bebebe; background: #dadada; }
.scroll button { height: 19px; border: 1px solid #ababab; background: #fff; }
.scroll .thumb { height: 131px; border: 1px solid #ababab; background: #fff; }
.scroll .down { margin-top: auto; }

.pane { width: 437px; padding: 8px 31px 0 18px; color: #262626; font-size: 16px; }
.pane-head { display: flex; align-items: center; gap: 40px; height: 40px; margin: 0 -9px 19px -4px; }
.pane-head h2 { margin-right: auto; font-size: 27px; font-weight: 300; line-height: 44px; color: #1e4e8c; }
.total { display: flex; align-items: flex-start; justify-content: space-between; width: 100%; height: 118px; padding: 11px 23px 0 16px; background: #2b579a; color: #fff; line-height: 30px; }
.total span { font-size: 17px; }
.total strong { font-size: 48px; line-height: 50px; font-weight: 600; }
.card { margin-top: 17px; padding: 12px 16px 3px; background: #fff; }
.card + .card { margin-top: 12px; }
.card h3 { margin-bottom: 13px; font-size: 14px; font-weight: bold; line-height: 30px; }
.card button { width: 100%; height: 45px; justify-content: space-between; }
.card button svg { margin-bottom: 4px; }
.card small { font-size: 14px; }
.card .done { color: #6b6b6b; }
.settings { display: flex; align-items: center; gap: 11px; margin: 21px 3px 0; font-size: 14px; color: #1e4e8c; }

/* status bar */
.status { display: flex; align-items: center; flex: none; gap: 27px; height: 28px; padding-left: 10px; border-top: 1px solid #c6c6c6; background: #f3f2f1; font-size: 12px; white-space: nowrap; }
.status-right { display: flex; align-items: center; height: 27px; margin-left: auto; padding-right: 10px; }
.focus { gap: 3px; margin-right: 14px; }
.mode { width: 50px; height: 27px; }
.on { background: #d2d0ce; }
.step { width: 22px; }
input[type="range"] { appearance: none; width: 125px; height: 16px; background: linear-gradient(#a0a0a0, #a0a0a0) center / 100% 1px no-repeat, linear-gradient(#a0a0a0, #a0a0a0) center / 1px 7px no-repeat; }
input[type="range"]::-webkit-slider-thumb { appearance: none; width: 6px; height: 14px; background: #777; }
.percent { margin-left: 12px; }
```
